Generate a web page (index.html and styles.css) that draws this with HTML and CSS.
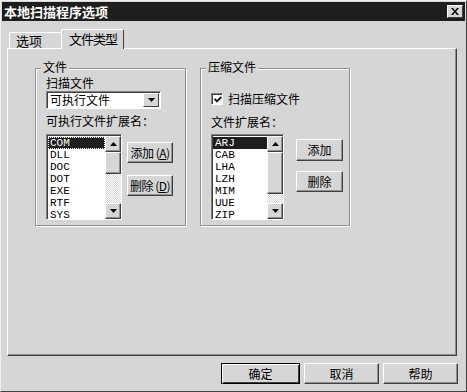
FILE: index.html
```html
<!DOCTYPE html>
<html lang="zh-CN">
  <head>
    <meta charset="UTF-8" />
    <title>本地扫描程序选项</title>
    <link rel="stylesheet" href="styles.css">
  </head>
  <body>
    <div class="window">
      <div class="titlebar">
        <span class="title">本地扫描程序选项</span>
        <span class="close">
          <svg width="8" height="7" viewBox="0 0 8 7"><path d="M0 0h2l2 2.5 2-2.5h2l-3 3.5 3 3.5h-2l-2-2.5-2 2.5h-2l3-3.5z" fill="#000"/></svg>
        </span>
      </div>
      <div class="body">
        <div class="tabs">
          <div class="tab">选项</div>
          <div class="tab active">文件类型</div>
        </div>
        <div class="panel">
          <div class="groups">
            <div class="group group-files">
              <span class="legend">文件</span>
              <div class="label">扫描文件</div>
              <div class="combo">
                <span class="combo-text">可执行文件</span>
                <span class="combo-btn"><svg width="7" height="4" viewBox="0 0 7 4"><path d="M0 0h7l-3.5 4z" fill="#000"/></svg></span>
              </div>
              <div class="label label-gap">可执行文件扩展名：</div>
              <div class="list-row">
                <div class="listbox">
                  <div class="items">
                    <div class="item selected focus">COM</div>
                    <div class="item">DLL</div>
                    <div class="item">DOC</div>
                    <div class="item">DOT</div>
                    <div class="item">EXE</div>
                    <div class="item">RTF</div>
                    <div class="item">SYS</div>
                  </div>
                  <div class="scrollbar">
                    <span class="sb-btn"><svg width="7" height="4" viewBox="0 0 7 4"><path d="M0 4h7l-3.5-4z" fill="#000"/></svg></span>
                    <span class="sb-thumb thumb-small"></span>
                    <span class="sb-track"></span>
                    <span class="sb-btn"><svg width="7" height="4" viewBox="0 0 7 4"><path d="M0 0h7l-3.5 4z" fill="#000"/></svg></span>
                  </div>
                </div>
                <div class="side-buttons">
                  <button class="btn btn-side">添加 (<u>A</u>)</button>
                  <button class="btn btn-side">删除 (<u>D</u>)</button>
                </div>
              </div>
            </div>
            <div class="group group-zip">
              <span class="legend">压缩文件</span>
              <div class="check-row">
                <span class="checkbox">
                  <svg width="8" height="8" viewBox="0 0 8 8"><path d="M0 3.5l1.2-1.2 1.8 1.8 3.8-3.8 1.2 1.2-5 5z" fill="#000"/></svg>
                </span>
                <span>扫描压缩文件</span>
              </div>
              <div class="label label-zip">文件扩展名：</div>
              <div class="list-row">
                <div class="listbox listbox-zip">
                  <div class="items">
                    <div class="item selected">ARJ</div>
                    <div class="item">CAB</div>
                    <div class="item">LHA</div>
                    <div class="item">LZH</div>
                    <div class="item">MIM</div>
                    <div class="item">UUE</div>
                    <div class="item">ZIP</div>
                  </div>
                  <div class="scrollbar">
                    <span class="sb-btn"><svg width="7" height="4" viewBox="0 0 7 4"><path d="M0 4h7l-3.5-4z" fill="#000"/></svg></span>
                    <span class="sb-thumb thumb-big"></span>
                    <span class="sb-track"></span>
                    <span class="sb-btn"><svg width="7" height="4" viewBox="0 0 7 4"><path d="M0 0h7l-3.5 4z" fill="#000"/></svg></span>
                  </div>
                </div>
                <div class="side-buttons side-zip">
                  <button class="btn btn-zip">添加</button>
                  <button class="btn btn-zip btn-zip2">删除</button>
                </div>
              </div>
            </div>
          </div>
        </div>
        <div class="footer">
          <button class="btn btn-footer btn-default">确定</button>
          <button class="btn btn-footer btn-cancel">取消</button>
          <button class="btn btn-footer btn-help">帮助</button>
        </div>
      </div>
    </div>
  </body>
</html>
```

FILE: styles.css
```css
body {
  margin: 0;
  font-family: "Noto Sans CJK SC", "Liberation Sans", sans-serif;
  font-size: 12px;
  color: #000;
  background: #d6d6d6;
}
.window {
  width: 467px;
  height: 392px;
  box-sizing: border-box;
  background: #d6d6d6;
  border-top: 1px solid #f0f0f0;
  border-left: 1px solid #f0f0f0;
  border-right: 1px solid #404040;
  border-bottom: 1px solid #404040;
}
.titlebar {
  display: flex;
  align-items: center;
  height: 19px;
  margin: 1px 1px 0 1px;
  background: #1e1e1e;
  padding-left: 2px;
}
.title {
  color: #fff;
  font-weight: bold;
  font-size: 13px;
  line-height: 19px;
}
.close {
  margin-left: auto;
  margin-right: 2px;
  width: 16px;
  height: 13px;
  box-sizing: border-box;
  display: flex;
  align-items: center;
  justify-content: center;
  background: #d6d6d6;
  border: 1px solid;
  border-color: #fff #404040 #404040 #fff;
}
.body {
  padding: 8px 0 0 6px;
}
.tabs {
  display: flex;
  align-items: flex-end;
  height: 19px;
  padding-left: 2px;
}
.tab {
  height: 15px;
  line-height: 15px;
  padding: 0 20px 0 6px;
  font-size: 13px;
  border: 1px solid;
  border-color: #fff #404040 transparent #fff;
  border-bottom: none;
  border-radius: 2px 2px 0 0;
}
.tab.active {
  height: 19px;
  line-height: 17px;
  padding: 0 6px 0 7px;
  margin-left: -2px;
  margin-bottom: -1px;
  position: relative;
  background: #d6d6d6;
  z-index: 1;
  letter-spacing: -1px;
}
.panel {
  width: 450px;
  height: 308px;
  box-sizing: border-box;
  border: 1px solid;
  border-color: #fff #404040 #404040 #fff;
  box-shadow: inset -1px -1px 0 #909090;
  padding: 19px 0 0 27px;
}
.groups {
  display: flex;
  gap: 14px;
}
.group {
  position: relative;
  height: 158px;
  box-sizing: border-box;
  border: 1px solid #909090;
  box-shadow: 1px 1px 0 #fff, inset 1px 1px 0 #fff;
}
.group-files {
  width: 151px;
  padding: 7px 0 0 10px;
}
.group-zip {
  width: 150px;
  padding: 23px 0 0 9px;
}
.legend {
  position: absolute;
  top: -9px;
  left: 5px;
  padding: 0 2px;
  line-height: 14px;
  background: #d6d6d6;
}
.label {
  line-height: 14px;
  white-space: nowrap;
}
.label-gap {
  margin-top: 5px;
}
.label-zip {
  margin-top: 9px;
  margin-left: 1px;
}
.check-row {
  display: flex;
  align-items: center;
  gap: 5px;
  line-height: 14px;
  margin-left: 1px;
}
.checkbox {
  width: 12px;
  height: 12px;
  box-sizing: border-box;
  display: flex;
  align-items: center;
  justify-content: center;
  background: #fff;
  border: 1px solid;
  border-color: #808080 #fff #fff #808080;
  box-shadow: inset 1px 1px 0 #404040;
  padding: 1px 0 0 1px;
}
.combo {
  display: flex;
  align-items: center;
  width: 115px;
  height: 18px;
  margin-top: 1px;
  box-sizing: border-box;
  background: #fff;
  border: 1px solid;
  border-color: #808080 #fff #fff #808080;
  box-shadow: inset 1px 1px 0 #404040;
}
.combo-text {
  padding-left: 3px;
  line-height: 14px;
}
.combo-btn {
  margin-left: auto;
  margin-right: 1px;
  width: 16px;
  height: 14px;
  box-sizing: border-box;
  display: flex;
  align-items: center;
  justify-content: center;
  background: #d6d6d6;
  border: 1px solid;
  border-color: #fff #404040 #404040 #fff;
}
.list-row {
  display: flex;
  margin-top: 6px;
}
.listbox {
  display: flex;
  width: 76px;
  height: 86px;
  box-sizing: border-box;
  background: #fff;
  border: 1px solid;
  border-color: #808080 #fff #fff #808080;
  box-shadow: inset 1px 1px 0 #404040;
  padding: 1px 0 0 1px;
}
.listbox-zip {
  width: 73px;
  margin-left: 1px;
  margin-top: -1px;
}
.items {
  flex: 1;
  padding-top: 1px;
  font-family: "Liberation Mono", "DejaVu Sans Mono", monospace;
  font-size: 11px;
}
.item {
  height: 12px;
  line-height: 12px;
  padding-left: 2px;
}
.item.selected {
  background: #1e1e1e;
  color: #fff;
}
.item.focus {
  outline: 1px dotted #fff;
  outline-offset: -1px;
}
.scrollbar {
  width: 16px;
  display: flex;
  flex-direction: column;
}
.sb-btn,
.sb-thumb {
  display: flex;
  align-items: center;
  justify-content: center;
  box-sizing: border-box;
  background: #d6d6d6;
  border: 1px solid;
  border-color: #fff #404040 #404040 #fff;
  box-shadow: inset -1px -1px 0 #909090;
}
.sb-btn {
  height: 16px;
}
.thumb-small {
  height: 22px;
}
.thumb-big {
  height: 42px;
}
.sb-track {
  flex: 1;
  background-color: #d6d6d6;
  background-image: repeating-conic-gradient(#fff 0 25%, #d6d6d6 0 50%);
  background-size: 2px 2px;
}
.side-buttons {
  display: flex;
  flex-direction: column;
  gap: 12px;
  margin-left: 5px;
  padding-top: 8px;
}
.side-zip {
  margin-left: 12px;
  padding-top: 4px;
  gap: 10px;
}
.btn {
  font-family: "Noto Sans CJK SC", "Liberation Sans", sans-serif;
  font-size: 12px;
  color: #000;
  padding: 0;
  background: #d6d6d6;
  border: 1px solid;
  border-color: #fff #404040 #404040 #fff;
  box-shadow: inset -1px -1px 0 #909090;
  box-sizing: border-box;
  line-height: 14px;
  white-space: nowrap;
}
.btn-side {
  width: 46px;
  height: 21px;
  letter-spacing: -0.5px;
}
.btn-zip {
  width: 47px;
  height: 22px;
}
.btn-zip2 {
  height: 21px;
}
.footer {
  display: flex;
  gap: 4px;
  padding: 7px 0 0 214px;
}
.btn-footer {
  width: 75px;
  height: 21px;
}
.btn-default {
  width: 79px;
  border: 1px solid #000;
  box-shadow: inset 1px 1px 0 #fff, inset -1px -1px 0 #404040;
}
```
